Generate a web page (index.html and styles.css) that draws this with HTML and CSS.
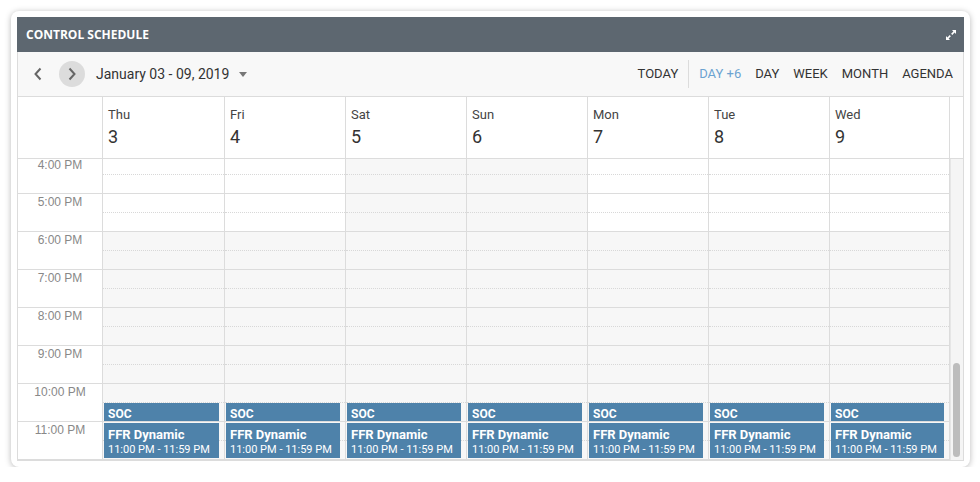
FILE: index.html
```html
<!DOCTYPE html>
<html lang="en">

<head>
    <meta charset="UTF-8">
    <title>Control Schedule</title>
    <link rel="stylesheet" href="styles.css">
</head>

<body>
    <div class="card">
        <div class="panel">
            <div class="panel-head">
                <span class="title">CONTROL SCHEDULE</span>
                <svg class="expand" width="12" height="12" viewBox="0 0 12 12">
                    <path d="M7 1h4v4l-1.4-1.4-2.3 2.3-1.2-1.2 2.3-2.3z M5 11H1V7l1.4 1.4 2.3-2.3 1.2 1.2-2.3 2.3z" fill="#fff" />
                </svg>
            </div>

            <div class="toolbar">
                <button class="nav-btn">
                    <svg width="10" height="14" viewBox="0 0 10 14"><path d="M7.5 1.5 2.5 7l5 5.5" fill="none" stroke="#666" stroke-width="2" /></svg>
                </button>
                <button class="nav-btn next">
                    <svg width="10" height="14" viewBox="0 0 10 14"><path d="M2.5 1.5 7.5 7l-5 5.5" fill="none" stroke="#666" stroke-width="2" /></svg>
                </button>
                <span class="range">January 03 - 09, 2019</span>
                <span class="caret"></span>

                <div class="views">
                    <button class="view">TODAY</button>
                    <span class="sep"></span>
                    <button class="view active">DAY +6</button>
                    <button class="view">DAY</button>
                    <button class="view">WEEK</button>
                    <button class="view">MONTH</button>
                    <button class="view">AGENDA</button>
                </div>
            </div>

            <div class="days-head">
                <div class="corner"></div>
                <div class="dh"><p class="dname">Thu</p><p class="dnum">3</p></div>
                <div class="dh"><p class="dname">Fri</p><p class="dnum">4</p></div>
                <div class="dh"><p class="dname">Sat</p><p class="dnum">5</p></div>
                <div class="dh"><p class="dname">Sun</p><p class="dnum">6</p></div>
                <div class="dh"><p class="dname">Mon</p><p class="dnum">7</p></div>
                <div class="dh"><p class="dname">Tue</p><p class="dnum">8</p></div>
                <div class="dh"><p class="dname">Wed</p><p class="dnum">9</p></div>
                <div class="gutter"></div>
            </div>

            <div class="body">
                <div class="scroll-area">
                    <div class="grid">
                        <div class="times">
                            <div class="hour">4:00 PM</div>
                            <div class="hour">5:00 PM</div>
                            <div class="hour">6:00 PM</div>
                            <div class="hour">7:00 PM</div>
                            <div class="hour">8:00 PM</div>
                            <div class="hour">9:00 PM</div>
                            <div class="hour">10:00 PM</div>
                            <div class="hour">11:00 PM</div>
                        </div>

                        <div class="day">
                            <div class="slot"></div><div class="slot"></div><div class="slot"></div><div class="slot"></div>
                            <div class="slot"></div><div class="slot"></div><div class="slot"></div><div class="slot"></div>
                            <div class="event soc"><b>SOC</b></div>
                            <div class="event ffr"><b>FFR Dynamic</b><span>11:00 PM - 11:59 PM</span></div>
                        </div>
                        <div class="day">
                            <div class="slot"></div><div class="slot"></div><div class="slot"></div><div class="slot"></div>
                            <div class="slot"></div><div class="slot"></div><div class="slot"></div><div class="slot"></div>
                            <div class="event soc"><b>SOC</b></div>
                            <div class="event ffr"><b>FFR Dynamic</b><span>11:00 PM - 11:59 PM</span></div>
                        </div>
                        <div class="day weekend">
                            <div class="slot"></div><div class="slot"></div><div class="slot"></div><div class="slot"></div>
                            <div class="slot"></div><div class="slot"></div><div class="slot"></div><div class="slot"></div>
                            <div class="event soc"><b>SOC</b></div>
                            <div class="event ffr"><b>FFR Dynamic</b><span>11:00 PM - 11:59 PM</span></div>
                        </div>
                        <div class="day weekend">
                            <div class="slot"></div><div class="slot"></div><div class="slot"></div><div class="slot"></div>
                            <div class="slot"></div><div class="slot"></div><div class="slot"></div><div class="slot"></div>
                            <div class="event soc"><b>SOC</b></div>
                            <div class="event ffr"><b>FFR Dynamic</b><span>11:00 PM - 11:59 PM</span></div>
                        </div>
                        <div class="day">
                            <div class="slot"></div><div class="slot"></div><div class="slot"></div><div class="slot"></div>
                            <div class="slot"></div><div class="slot"></div><div class="slot"></div><div class="slot"></div>
                            <div class="event soc"><b>SOC</b></div>
                            <div class="event ffr"><b>FFR Dynamic</b><span>11:00 PM - 11:59 PM</span></div>
                        </div>
                        <div class="day">
                            <div class="slot"></div><div class="slot"></div><div class="slot"></div><div class="slot"></div>
                            <div class="slot"></div><div class="slot"></div><div class="slot"></div><div class="slot"></div>
                            <div class="event soc"><b>SOC</b></div>
                            <div class="event ffr"><b>FFR Dynamic</b><span>11:00 PM - 11:59 PM</span></div>
                        </div>
                        <div class="day">
                            <div class="slot"></div><div class="slot"></div><div class="slot"></div><div class="slot"></div>
                            <div class="slot"></div><div class="slot"></div><div class="slot"></div><div class="slot"></div>
                            <div class="event soc"><b>SOC</b></div>
                            <div class="event ffr"><b>FFR Dynamic</b><span>11:00 PM - 11:59 PM</span></div>
                        </div>
                    </div>
                </div>

                <div class="scrollbar">
                    <div class="thumb"></div>
                </div>
            </div>
        </div>
    </div>
</body>

</html>
```

FILE: styles.css
```css
body {
    margin: 0;
    background: #fff;
    font-family: Roboto, "Noto Sans", sans-serif;
    color: #333;
}

button {
    font-family: inherit;
    background: none;
    border: 0;
    padding: 0;
    cursor: pointer;
}

p {
    margin: 0;
}

.card {
    width: 959px;
    box-sizing: border-box;
    margin: 11px 0 0 11px;
    padding: 6px;
    background: #fff;
    border-radius: 8px;
    box-shadow: 0 1px 6px rgba(0, 0, 0, .28);
}

.panel {
    border: 1px solid #dcdcdc;
    border-top: 0;
}

/* dark title bar */
.panel-head {
    height: 35px;
    margin: 0 -1px;
    background: #5d6770;
    display: flex;
    align-items: center;
    justify-content: space-between;
    padding: 0 7px 0 9px;
}

.title {
    font-family: "Open Sans", sans-serif;
    font-weight: 700;
    font-size: 12px;
    color: #fff;
}

/* toolbar */
.toolbar {
    height: 44px;
    background: #f8f8f8;
    border-bottom: 1px solid #dcdcdc;
    display: flex;
    align-items: center;
    padding: 0 3px 0 7px;
}

.nav-btn {
    width: 26px;
    height: 26px;
    border-radius: 50%;
    display: flex;
    align-items: center;
    justify-content: center;
}

.nav-btn.next {
    margin-left: 8px;
    background: #dcdcdc;
}

.range {
    margin-left: 11px;
    font-size: 14px;
    color: #333;
}

.caret {
    margin-left: 10px;
    border-left: 4.5px solid transparent;
    border-right: 4.5px solid transparent;
    border-top: 5px solid #777;
}

.views {
    margin-left: auto;
    display: flex;
    align-items: center;
}

.view {
    font-size: 13px;
    color: #333;
    padding: 0 7px;
    line-height: 28px;
}

.view.active {
    color: #6ca3d1;
}

.sep {
    width: 1px;
    height: 28px;
    background: #dcdcdc;
    margin: 0 3px;
}

/* day headers */
.days-head {
    height: 62px;
    box-sizing: border-box;
    border-bottom: 1px solid #dcdcdc;
    display: grid;
    grid-template-columns: 85px 122px repeat(5, 121px) 120px 13px;
}

.corner,
.dh {
    border-right: 1px solid #dcdcdc;
}

.dh {
    padding: 10px 0 0 5px;
}

.dname {
    font-size: 13px;
    line-height: 16px;
    color: #444;
}

.dnum {
    font-size: 18px;
    line-height: 22px;
    margin-top: 3px;
    color: #333;
}

/* time grid */
.body {
    height: 301px;
    display: grid;
    grid-template-columns: 1fr 13px;
    overflow: hidden;
}

.scroll-area {
    overflow: hidden;
}

.grid {
    margin-top: -3px;
    display: grid;
    grid-template-columns: 85px 122px repeat(5, 121px) 120px;
}

.times,
.day {
    border-right: 1px solid #dcdcdc;
}

.day {
    position: relative;
}

.hour,
.slot {
    height: 38px;
    box-sizing: border-box;
    border-bottom: 1px solid #dcdcdc;
}

.hour {
    text-align: center;
    font-family: "Liberation Sans", Arial, sans-serif;
    font-size: 12px;
    line-height: 14px;
    padding-top: 1px;
    color: #888;
}

.hour:first-child {
    padding-top: 3px;
    line-height: 12px;
}

.slot {
    position: relative;
}

.slot::after {
    content: "";
    position: absolute;
    left: 0;
    right: 0;
    top: 18px;
    border-top: 1px dotted #d8d8d8;
}

.day .slot:nth-child(n+3),
.weekend .slot {
    background: #f7f7f7;
}

.event {
    position: absolute;
    left: 1px;
    right: 5px;
    background: #4e82aa;
    color: #fff;
    padding: 0 4px;
    overflow: hidden;
    white-space: nowrap;
}

.event b,
.event span {
    display: block;
}

.soc {
    top: 247px;
    height: 18px;
    font-size: 12px;
    line-height: 14px;
    padding-top: 4px;
    box-sizing: border-box;
}

.ffr {
    top: 267px;
    height: 35px;
    padding-top: 4px;
    box-sizing: border-box;
}

.ffr b {
    font-size: 13px;
    line-height: 15px;
}

.ffr span {
    font-size: 11px;
    line-height: 16px;
}

.scrollbar {
    background: #f5f5f5;
    border-left: 1px solid #e6e6e6;
}

.thumb {
    width: 7px;
    height: 94px;
    margin: 204px 0 0 2px;
    border-radius: 4px;
    background: #bdbdbd;
}
```
